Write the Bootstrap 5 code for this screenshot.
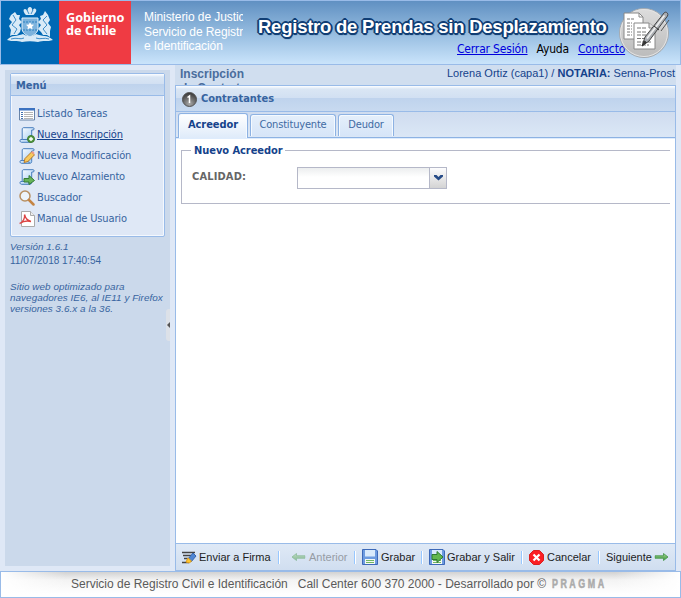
<!DOCTYPE html>
<html lang="es">
<head>
<meta charset="utf-8">
<meta name="viewport" content="width=device-width, initial-scale=1">
<title>Registro de Prendas sin Desplazamiento</title>
<link href="https://cdn.jsdelivr.net/npm/bootstrap@5.3.0/dist/css/bootstrap.min.css" rel="stylesheet">
<style>
:root{--line:#99bbe8;--navy:#15428b;--ink:#3764a0;--tahoma:"DejaVu Sans Condensed","DejaVu Sans",sans-serif;--arial:"Liberation Sans",Arial,sans-serif}
body{height:598px;background:#dfe8f6;font:11px/14px var(--arial);color:var(--ink)}
svg{display:block;flex:none}
.top{height:65px;border:1px solid var(--line);background:linear-gradient(#6090c2,#94bbdf 50%,#cae4fb)}
.arms{width:58px;background:#0068b4}
.gob{width:72px;background:#ef3b43;color:#fff;font:bold 12.7px/13px "Noto Sans","Open Sans",sans-serif;padding:10px 0 0 7px}
.minis{width:99px;margin-left:13px;padding-top:9px;font-size:12px;line-height:14.5px;color:#fff;letter-spacing:-.08px}
.brand-title{left:257px;top:13px;font:bold 18.5px/26px var(--arial);color:#fff;letter-spacing:-.24px;text-shadow:1px 0 #103e75,-1px 0 #103e75,0 1px #103e75,0 -1px #103e75,1px 1px #103e75,-1px -1px #103e75,1px -1px #103e75,-1px 1px #103e75,2px 0 #103e75,-2px 0 #103e75,0 2px #103e75,0 -2px #103e75,1px 2px 1px #103e75}
.toplinks{left:456px;top:40px;font:12px/16px var(--tahoma);letter-spacing:-.18px;color:#000}
.toplinks a{color:#00d}
.toplinks span{margin:0 9px}
.badge-doc{left:617px;top:5px}
.side{width:165px;height:496px;margin:5px 5px 0 5px;background:#cbd9eb;padding:3px 5px 0 5px}
.menu-box{height:164px;width:155px;border:1px solid var(--line);border-radius:2px;box-shadow:inset 0 0 0 1px #f4f8fe;background:#dfe8f6}
.bar{background:linear-gradient(#fbfdff 0,#f2f7fd 1px,#dae6f4 3px,#d2e0f2 46%,#bfd3ed 50%,#c8daf0 100%);border-bottom:1px solid var(--line)}
.menu-box .bar{height:22px;padding:5px 0 0 5px;font:bold 11px/14px var(--tahoma);color:var(--ink)}
.menu-box ul{padding:7px 0 0 8px}
.menu-box li{height:21px;gap:2px;font:11px/21px var(--tahoma);letter-spacing:-.14px}
.menu-box li:first-child{letter-spacing:.02px}
.menu-box li.on a{color:var(--navy);text-decoration:underline}
.menu-box a{color:inherit;text-decoration:none}
.note{font-style:italic;font-size:9.9px;line-height:11px;white-space:nowrap;letter-spacing:.06px}
.stamp{font-size:10px;line-height:14px;margin:2px 0 13px}
.ver{margin-top:4px}
.grip{right:0;top:239px;width:4px;height:32px;background:#dce1e8;border-radius:3px 0 0 3px}
.main{width:501px}
.user{height:20px;background:#d0deef;overflow:hidden}
.user b,.user span{color:var(--navy)}
.who{padding:1px 1px 0 0;letter-spacing:.02px}
.crumb{width:75px;height:20px;overflow:hidden;padding:2px 0 0 5px;font-size:12px;line-height:14px;font-weight:bold;color:#4a6d9d}
.panel{height:486px;border:1px solid var(--line);background:#fff}
.panel>.bar{height:26px;padding:1px 0 0 6px;gap:4px;font:bold 11px/24px var(--tahoma);color:var(--ink)}
.tabs{height:26px;background:linear-gradient(#cfdcef,#dbe7f6);border-bottom:1px solid #8db2e3;padding:1px 0 0 2px;gap:2px}
.tabs a{height:22px;margin-top:1px;border:1px solid #8db2e3;border-bottom:0;border-radius:3px 3px 0 0;box-shadow:inset 1px 1px #f5faff,inset -1px 0 #f5faff;background:linear-gradient(#e5effb,#d6e5f8);font:11px/20px var(--tahoma);letter-spacing:-.18px;text-align:center;color:#416aa3;text-decoration:none}
.tabs a.on{height:25px;margin-top:0;background:linear-gradient(#fff,#dfebfa);font-weight:bold;line-height:22px;letter-spacing:-.05px;color:var(--navy)}
.strip{height:1px;background:#deecfd}
.group{height:54px;margin:11px 5px 0 5px;border:1px solid #b5b8c8;border-right:0;position:relative}
.group .cap{position:absolute;left:9px;top:-7px;background:#fff;padding:0 2px 0 3px;font:bold 11px/14px var(--tahoma);letter-spacing:-.05px;color:var(--navy)}
.group label{width:105px;font:bold 11px/20px var(--tahoma);letter-spacing:.15px;color:#666}
.combo{width:150px;height:22px;border:1px solid #b5b8c8;background:linear-gradient(#eceeef,#fff 9px)}
.combo i{width:17px;border-left:1px solid #b5b8c8;background:linear-gradient(#fdfdfe,#d3d3d3)}
.tools{height:27px;border-top:1px solid var(--line);background:linear-gradient(#dfe9f6,#d0def0);font-size:11px;color:#1d1d1d;padding-left:6px}
.tools>*{white-space:nowrap;flex:none}
.tool{height:26px;gap:2px}
.tool svg{margin-right:1px}
.sep{width:2px;height:13px;border-left:1px solid #98c8ff;border-right:1px solid #fff}
.t1{width:96px}
.t1 svg,.t4 svg{margin-right:0}
.t2{margin-left:11px;width:63px;opacity:.5;color:#555}
.t3{margin-left:6px;width:59px}
.t4{margin-left:6px;width:92px}
.t5{margin-left:6px;width:69px}
.t6{margin-left:6px}
.foot{height:27px;border:1px solid var(--line);background:linear-gradient(#d2d2d2,#f3f3f3 8px,#fff 22px);color:#5a5a5a;font-size:12px;line-height:24px;padding-left:70px}
.foot:before{content:"";position:absolute;inset:0;background:linear-gradient(90deg,#fff,#fff0 65px calc(100% - 65px),#fff)}
.foot span{position:relative}
.call{margin-left:10px}
.pragma{font:bold 12px/24px var(--arial);letter-spacing:3.4px;color:#aaa;-webkit-text-stroke:.5px #aaa;transform:scaleX(.74);transform-origin:0 0;margin-left:6px}
</style>
</head>
<body class="overflow-hidden">
<svg class="position-absolute" width="0" height="0" aria-hidden="true">
  <defs>
    <linearGradient id="sc" x1="0" y1="0" x2="1" y2="1"><stop stop-color="#fff"/><stop offset="1" stop-color="#9cc8f2"/></linearGradient>
    <radialGradient id="ball" cx=".5" cy=".8" r=".8"><stop stop-color="#aaa"/><stop offset="1" stop-color="#333"/></radialGradient>
    <linearGradient id="disc" x1="0" y1="0" x2="0" y2="1"><stop stop-color="#ddd"/><stop offset="1" stop-color="#bbb"/></linearGradient>
    <linearGradient id="arr" x1="0" y1="0" x2="0" y2="1"><stop stop-color="#a5d98f"/><stop offset="1" stop-color="#3c9140"/></linearGradient>
    <symbol id="scroll" viewBox="0 0 16 16"><path d="M4.500.7H14c1.500 0 1.500 2.300 0 2.300h-1.300v10.500c0 1.500-1 1.800-2 1.800H2.500C.7 15.300.5 12.500 2 12.500h1.200V3C3.200 1.500 3.500.7 4.500.7z" fill="url(#sc)" stroke="#477dbd"/><path d="M3.200 12.500h6.300c0 1.500.3 2.500 1.500 2.500" fill="none" stroke="#477dbd"/></symbol>
    <symbol id="rarrow" viewBox="0 0 14 8"><path d="M.5 2.800h8.500V.5L13.500 4 9 7.500V5.200H.5z" fill="url(#arr)" stroke="#4b9a50" stroke-width=".9"/></symbol>
    <symbol id="floppy" viewBox="0 0 16 16"><path d="M.5.5h13.500l1.500 1.500v13.500H.5z" fill="#6d9be0" stroke="#3d69b8"/><path d="M3 1h10v6.500H3z" fill="#d9eafc"/><path d="M3 10h10v5H3z" fill="#f5f8f3"/><path d="M4 11.500h8M4 13.500h8" stroke="#70b662"/></symbol>
  </defs>
</svg>

<header class="top d-flex position-relative">
  <div class="arms">
    <svg width="58" height="63" viewBox="0 0 58 63">
      <g fill="#d8eaf7">
        <path d="M25 14c-3-3-3-6-1-6 1 0 2 1 2.500 2 0-3 1-4 2.500-4s2 1 2.500 4c.5-2 2-3 3-2 2 1 0 4-2 6z"/>
        <path d="M10 14l4-3 2 3 3 0-1 4 3 3-3 3 2 3-1 4-3 3-5 0-2 1 1-6-2-4 3-4-3-3z"/>
        <path d="M47 14l-3-4-2 4-3 1 1 3-3 3 3 3-3 4 3 3 2 3 4 0 3 2 0-6 1-4-3-4 2-3z"/>
        <path d="M6 39c5-6 10-3 16-6 5 3 9 3 13 0 6 3 11 0 17 6-6 2-10 0-15 2-5-1-11-1-16 0-5-2-9 0-15-2z"/>
      </g>
      <path d="M21 17h16v10c0 5-4 7-8 9-4-2-8-4-8-9z" fill="#7db3dd" stroke="#e4f1fa"/>
      <g fill="none" stroke="#1674ba" stroke-width=".8"><path d="M12 14l3 5-4 5 5 4-3 5M46 15l-4 4 4 5-4 4 4 5M10 38c6-2 9 1 13-1M35 37c4 2 8-1 13 1M26 9l2 4M32 9l-2 4"/><path d="M22 21h14M22 29h14" stroke-dasharray="2 1"/></g>
      <path d="M29 21l1.200 2.600 2.800.2-2 1.900.6 2.800-2.600-1.500-2.600 1.500.6-2.800-2-1.900 2.800-.2z" fill="#fff"/>
    </svg>
  </div>
  <div class="gob">Gobierno<br>de Chile</div>
  <div class="minis overflow-hidden text-nowrap">Ministerio de Justicia<br>Servicio de Registro Civil<br>e Identificación</div>
  <div class="brand-title position-absolute text-nowrap">Registro de Prendas sin Desplazamiento</div>
  <nav class="toplinks position-absolute d-flex text-nowrap"><a href="#">Cerrar Sesión</a><span>Ayuda</span><a href="#">Contacto</a></nav>
  <svg class="badge-doc position-absolute" width="54" height="54" viewBox="0 0 54 54">
    <circle cx="26" cy="27" r="24.500" fill="url(#disc)" stroke="#a5abb1"/><circle cx="26" cy="27" r="23.500" fill="none" stroke="#e4e4e4"/>
    <path d="M6 7h15l4 4v22H6z" fill="#fff" stroke="#888"/><path d="M21 7v4h4" fill="none" stroke="#888"/>
    <path d="M9 13h8M9 17h5M9 20h5M9 23h5M9 26h5M9 29h5" stroke="#777" stroke-dasharray="3 1"/>
    <path d="M16 17h15l6 5v21H16z" fill="#fff" stroke="#888"/><path d="M31 17v5h6" fill="#ddd" stroke="#888"/>
    <path d="M19 22h9M19 26h9M19 29h13M19 32.500h10M19 36h14M19 39h12" stroke="#777" stroke-dasharray="4 1"/>
    <path d="M24 40l3-9L46 7c1.500-2 5 0 3.500 3L31 35z" fill="#a9adb2" stroke="#444"/><path d="M29 32.500L46.500 9.500" stroke="#eee" stroke-width="1.800"/><path d="M24 40l2.500-5 2 1.500zM36 20l5 4" fill="#333" stroke="#333"/><path d="M43 25l8-11" stroke="#555"/>
  </svg>
</header>

<div class="d-flex">
  <aside class="side position-relative">
    <div class="menu-box">
      <div class="bar">Menú</div>
      <ul class="list-unstyled m-0">
        <li class="d-flex align-items-center"><svg width="16" height="16" viewBox="0 0 16 16"><path d="M.5 2.500h15v11.500H.5z" fill="#fff" stroke="#6883a8"/><path d="M0 2h16v2.500H0z" fill="#3c72c0"/><path d="M2 6.500h2M2 8.500h2M2 10.500h2M2 12.500h2" stroke="#4472b0"/><path d="M5 6.500h9M5 8.500h9M5 10.500h9M5 12.500h9" stroke="#b5b5b5"/></svg><a href="#">Listado Tareas</a></li>
        <li class="d-flex align-items-center on"><svg width="16" height="16" viewBox="0 0 16 16"><use href="#scroll"/><circle cx="12" cy="12" r="3.500" fill="#569b43" stroke="#3c7930"/><path d="M12 10v4M10 12h4" stroke="#fff" stroke-width="1.400"/></svg><a href="#">Nueva Inscripción</a></li>
        <li class="d-flex align-items-center"><svg width="16" height="16" viewBox="0 0 16 16"><use href="#scroll"/><path d="M5 14.500l1-4 6.500-6.500 3 2.800L9 13.500z" fill="#f8c95c" stroke="#b67a28"/><path d="M12 4.300l1.500-1.200 2.200 2-1.300 1.500z" fill="#ef9a88"/></svg><a href="#">Nueva Modificación</a></li>
        <li class="d-flex align-items-center"><svg width="16" height="16" viewBox="0 0 16 16"><use href="#scroll"/><path d="M5 9.500h5V6.500l5.500 5-5.500 4V13H5z" fill="#67b35a" stroke="#347d34"/></svg><a href="#">Nuevo Alzamiento</a></li>
        <li class="d-flex align-items-center"><svg width="16" height="16" viewBox="0 0 16 16"><circle cx="6" cy="6" r="5" fill="#edf4fb" stroke="#b89063" stroke-width="1.500"/><path d="M10 10l4.500 4.500" stroke="#c48444" stroke-width="2.500" stroke-linecap="round"/></svg><a href="#">Buscador</a></li>
        <li class="d-flex align-items-center"><svg width="16" height="16" viewBox="0 0 16 16"><path d="M2.500.5h9l4 4v11h-13z" fill="#fff" stroke="#aaa"/><path d="M11.500.5v4h4" fill="#eee" stroke="#aaa"/><path d="M.7 12.500C4 11 6.300 7 5.500 3.500c1 4.500 3 6 6.500 7C8 9.500 4.500 10 .7 12.500z" fill="none" stroke="#dc4444" stroke-width="1.400"/></svg><a href="#">Manual de Usuario</a></li>
      </ul>
    </div>
    <div class="note ver">Versión 1.6.1</div>
    <div class="stamp">11/07/2018 17:40:54</div>
    <div class="note">Sitio web optimizado para<br>navegadores IE6, al IE11 y Firefox<br>versiones 3.6.x a la 36.</div>
    <div class="grip position-absolute"><svg width="4" height="32"><path d="M4 13v6l-3-3z" fill="#555"/></svg></div>
  </aside>

  <main class="main">
    <div class="user d-flex justify-content-between">
      <div class="crumb">Inscripción<br>de Contrato</div>
      <div class="who text-nowrap"><span>Lorena Ortiz (capa1) / <b>NOTARIA:</b> Senna-Prost</span></div>
    </div>
    <section class="panel d-flex flex-column">
      <div class="bar d-flex align-items-center"><svg width="15" height="15" viewBox="0 0 15 15"><circle cx="7.500" cy="7.500" r="7" fill="url(#ball)" stroke="#555"/><path d="M5.500 5.500L7.500 4v7" stroke="#fff" stroke-width="1.500" fill="none"/></svg><span>Contratantes</span></div>
      <div class="tabs d-flex">
        <a class="on" href="#" style="width:70px">Acreedor</a><a href="#" style="width:86px">Constituyente</a><a href="#" style="width:56px">Deudor</a>
      </div>
      <div class="strip"></div>
      <div class="group">
        <span class="cap">Nuevo Acreedor</span>
        <div class="d-flex align-items-start" style="padding:16px 0 0 10px">
          <label>CALIDAD:</label>
          <div class="combo d-flex justify-content-end"><i class="d-flex align-items-center justify-content-center"><svg width="9" height="6" viewBox="0 0 9 6"><path d="M0 0h2.500l2 2 2-2H9v1.500L4.500 5.500 0 1.500z" fill="#264b87"/></svg></i></div>
        </div>
      </div>
      <footer class="tools mt-auto d-flex align-items-center">
        <div class="tool d-flex align-items-center t1"><svg width="15" height="15" viewBox="0 0 15 15"><path d="M0 2.500h13M1 5.500h8M2 8.500h5M0 12.500h7" stroke="#444" stroke-width="1.300"/><path d="M6 9l5-6 3 3-5 6z" fill="#4f86d3" stroke="#3565af"/><path d="M4 12l2-4 3.500 3-2 2z" fill="#ffc52c" stroke="#e19e1c"/></svg><span>Enviar a Firma</span></div>
        <i class="sep"></i>
        <div class="tool d-flex align-items-center t2"><svg width="15" height="8" viewBox="0 0 14 8"><use href="#rarrow" width="14" height="8" transform="matrix(-1 0 0 1 14 0)"/></svg><span>Anterior</span></div>
        <i class="sep"></i>
        <div class="tool d-flex align-items-center t3"><svg width="16" height="16"><use href="#floppy"/></svg><span>Grabar</span></div>
        <i class="sep"></i>
        <div class="tool d-flex align-items-center t4"><svg width="16" height="16" viewBox="0 0 16 16"><use href="#floppy"/><path d="M3 5.500h5V2.500l6 5.500-6 5.500v-3H3z" fill="#62b74d" stroke="#2e7b32"/></svg><span>Grabar y Salir</span></div>
        <i class="sep"></i>
        <div class="tool d-flex align-items-center t5"><svg width="15" height="15" viewBox="0 0 15 15"><path d="M4.500.5h6l4 4v6l-4 4h-6l-4-4v-6z" fill="#fb1f24" stroke="#d92020"/><path d="M4.500 4.500l6 6M10.500 4.500l-6 6" stroke="#fff" stroke-width="2.200"/></svg><span>Cancelar</span></div>
        <i class="sep"></i>
        <div class="tool d-flex align-items-center t6"><span>Siguiente</span><svg width="15" height="8" viewBox="0 0 14 8"><use href="#rarrow" width="14" height="8"/></svg></div>
      </footer>
    </section>
  </main>
</div>
<footer class="foot position-relative d-flex text-nowrap"><span>Servicio de Registro Civil e Identificación</span><span class="call">Call Center 600 370 2000 - Desarrollado por ©</span><span class="pragma">PRAGMA</span></footer>
<script src="https://cdn.jsdelivr.net/npm/bootstrap@5.3.0/dist/js/bootstrap.bundle.min.js"></script>
</body>
</html>
